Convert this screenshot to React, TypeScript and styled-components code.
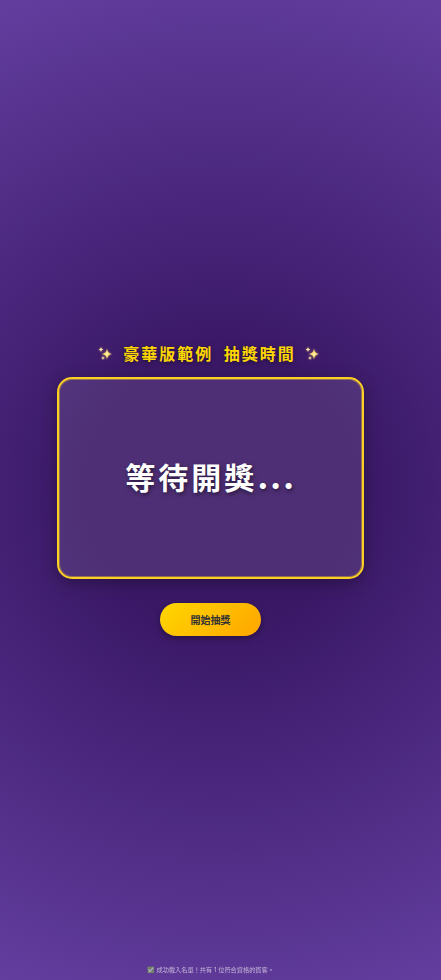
import React from "react";
import styled, { createGlobalStyle } from "styled-components";

const Global = createGlobalStyle`
  html, body { margin: 0; padding: 0; height: 100%; }
  #root { height: 100%; }
  body { font-family: "Inter", "Noto Sans CJK TC", "Noto Color Emoji", sans-serif; }
`;

const Page = styled.div`
  position: relative;
  width: 441px;
  height: 980px;
  overflow: hidden;
  box-sizing: border-box;
  padding-right: 20px;
  display: flex;
  flex-direction: column;
  align-items: center;
  background: radial-gradient(circle, #3a1866 25%, #633e9f 100%);
`;

const Title = styled.h1`
  margin: 342px 0 0;
  padding-right: 4px;
  height: 24px;
  display: flex;
  align-items: center;
  gap: 8px;
`;

const TitleText = styled.span`
  padding: 0 1px 0 3px;
  font-size: 16px;
  line-height: 24px;
  font-weight: 700;
  letter-spacing: 2px;
  word-spacing: 4.5px;
  color: #ffd700;
  white-space: pre;
  text-shadow: 0 1px 4px rgba(0, 0, 0, 0.5);
`;

const SparkleIcon = styled.svg`
  width: 14px;
  height: 16px;
  flex: none;
  filter: drop-shadow(0 0 1px rgba(255, 210, 80, 0.6));
`;

const Card = styled.div`
  margin-top: 11px;
  width: 307px;
  height: 202px;
  box-sizing: border-box;
  border: 2px solid #fbd022;
  border-radius: 15px;
  background: rgba(255, 255, 255, 0.1);
  box-shadow: 0 4px 16px rgba(0, 0, 0, 0.3), inset 0 0 0 1px rgba(251, 208, 34, 0.4);
  display: flex;
  align-items: center;
  justify-content: center;
`;

const Waiting = styled.div`
  padding-bottom: 4px;
  font-size: 30px;
  font-weight: 700;
  letter-spacing: 3px;
  color: #fff;
  text-shadow: 1px 2px 4px rgba(0, 0, 0, 0.5);
`;

const Dots = styled.span`
  font-weight: 900;
  letter-spacing: 1.7px;
`;

const Start = styled.button`
  margin-top: 24px;
  width: 101px;
  height: 33px;
  border: none;
  border-radius: 17px;
  padding: 0 0 1px;
  font: inherit;
  font-size: 10px;
  font-weight: 700;
  color: #333;
  background: linear-gradient(135deg, #ffd700, #ffa500);
  box-shadow: 0 2px 6px rgba(0, 0, 0, 0.35);
`;

const Footer = styled.div`
  position: absolute;
  left: 0;
  right: 20px;
  top: 964px;
  text-align: center;
  font-size: 6.2px;
  line-height: 12px;
  color: #fff;
  opacity: 0.6;
`;

function Sparkle() {
  const star = (x: number, y: number, r: number) => {
    const c = r * 0.06;
    return `M${x} ${y - r}Q${x + c} ${y - c} ${x + r} ${y}Q${x + c} ${y + c} ${x} ${y + r}Q${x - c} ${y + c} ${x - r} ${y}Q${x - c} ${y - c} ${x} ${y - r}Z`;
  };
  return (
    <SparkleIcon viewBox="0 0 14 16" aria-hidden="true">
      <path d={star(9, 8, 5.5)} fill="#ffe27a" />
      <circle cx="9" cy="8" r="0.9" fill="#fff6c8" />
      <path d={star(3, 3.5, 2.4)} fill="#ffeeb0" />
      <path d={star(5, 12, 2)} fill="#ffeeb0" />
    </SparkleIcon>
  );
}

export default function App() {
  return (
    <Page>
      <Global />
      <Title>
        <Sparkle />
        <TitleText>豪華版範例 抽獎時間</TitleText>
        <Sparkle />
      </Title>
      <Card>
        <Waiting>
          等待開獎<Dots>...</Dots>
        </Waiting>
      </Card>
      <Start>開始抽獎</Start>
      <Footer>✅ 成功載入名單！共有 1 位符合資格的賓客。</Footer>
    </Page>
  );
}
